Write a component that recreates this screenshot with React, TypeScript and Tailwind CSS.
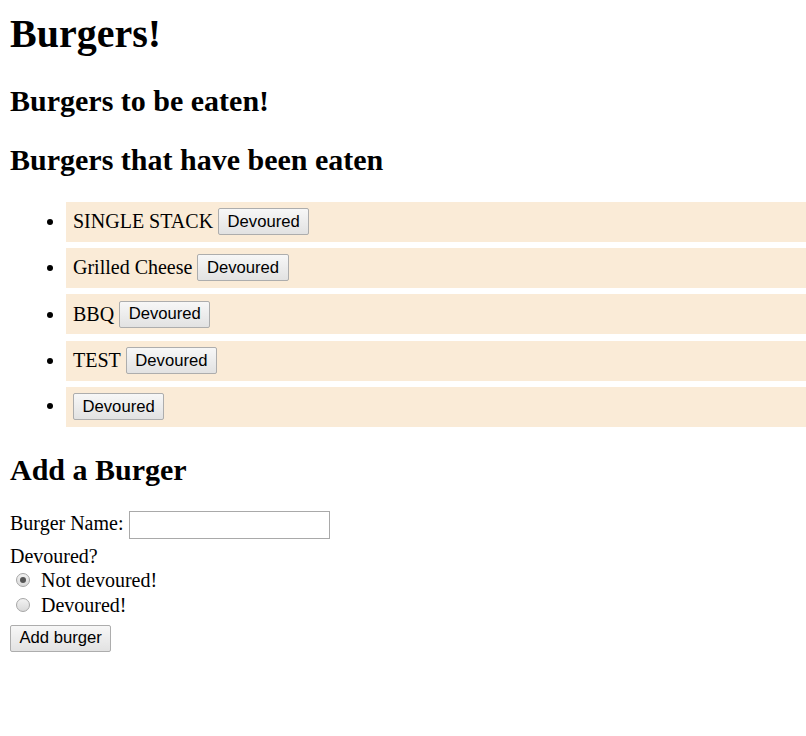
const eaten = ["SINGLE STACK", "Grilled Cheese", "BBQ", "TEST", ""];

function WinButton({ label }: { label: string }) {
    return (
        <button
            type="button"
            className="h-[27px] px-[8.5px] border border-[#adadad] rounded-[2px] bg-gradient-to-b from-[#f7f7f7] to-[#e2e2e2] text-[16.67px] leading-[20px] text-black font-['Liberation_Sans',Arial,sans-serif]"
        >
            {label}
        </button>
    );
}

function Radio({ checked, label }: { checked?: boolean; label: string }) {
    return (
        <div className="flex h-[24.6px] items-start">
            <span className="ml-[6px] mr-[11px] mt-[5px] flex h-[14px] w-[14px] items-center justify-center rounded-full border border-[#a6a6a6] bg-gradient-to-b from-[#f2f2f2] to-[#d9d9d9]">
                {checked && <span className="h-[6px] w-[6px] rounded-full bg-[#555555]" />}
            </span>
            <span className="pt-[1.5px] leading-[23px]">{label}</span>
        </div>
    );
}

export default function App() {
    return (
        <div className="min-h-[736px] bg-white px-[10px] text-[20px] text-black font-['Liberation_Serif','Times_New_Roman',serif]">
            <h1 className="pt-[11px] text-[40px] font-bold leading-[46px]">Burgers!</h1>

            <h2 className="mt-[26px] text-[30px] font-bold leading-[35px]">Burgers to be eaten!</h2>

            <h2 className="mt-[24.4px] text-[30px] font-bold leading-[35px]">Burgers that have been eaten</h2>

            <ul className="-mr-[10px] mt-[24.3px] flex list-disc flex-col gap-[6.3px] pl-[56px]">
                {eaten.map((name, i) => (
                    <li key={i} className="list-item">
                        <div className="flex h-[40px] items-center gap-[5px] bg-[#faebd7] pl-[7px]">
                            {name && <span className="leading-[23px]">{name}</span>}
                            <WinButton label="Devoured" />
                        </div>
                    </li>
                ))}
            </ul>

            <h2 className="mt-[25.5px] text-[30px] font-bold leading-[35px]">Add a Burger</h2>

            <form className="mt-[23.3px]">
                <div className="flex h-[28px] items-center gap-[5px]">
                    <span className="pb-[3px] leading-[23px]">Burger Name:</span>
                    <input
                        type="text"
                        className="h-[28px] w-[201px] border border-[#a9a9a9] bg-white px-[3px] outline-none"
                    />
                </div>

                <div className="mt-[6.3px] leading-[23px]">Devoured?</div>
                <Radio checked label="Not devoured!" />
                <Radio label="Devoured!" />

                <div className="mt-[4px]">
                    <WinButton label="Add burger" />
                </div>
            </form>
        </div>
    );
}
